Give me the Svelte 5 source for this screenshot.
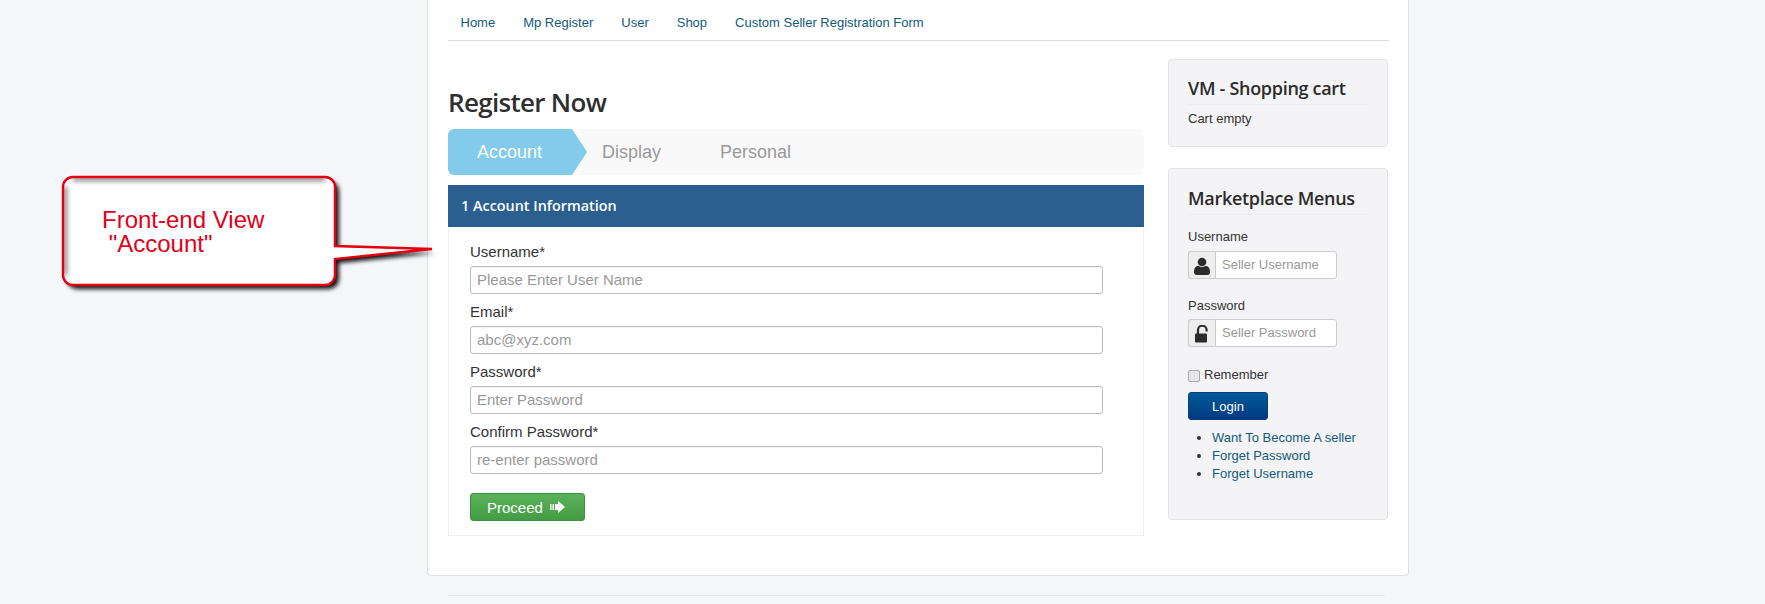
<script lang="ts">
const navLinks = ["Home", "Mp Register", "User", "Shop", "Custom Seller Registration Form"];
const fields = [
  { label: "Username*", placeholder: "Please Enter User Name" },
  { label: "Email*", placeholder: "abc@xyz.com" },
  { label: "Password*", placeholder: "Enter Password" },
  { label: "Confirm Password*", placeholder: "re-enter password" },
];
const sideLinks = ["Want To Become A seller", "Forget Password", "Forget Username"];
const bubble = "M13 3H265a10 10 0 0 1 10 10V72L372 75L275 85V101a10 10 0 0 1-10 10H13a10 10 0 0 1-10-10V13A10 10 0 0 1 13 3z";
</script>

<div class="page">
  <div class="card">
    <ul class="nav">
      {#each navLinks as link}
        <li>{link}</li>
      {/each}
    </ul>

    <div class="columns">
      <main class="content">
        <h1>Register Now</h1>
        <div class="wizard">
          <div class="step active">Account</div>
          <div class="step display">Display</div>
          <div class="step">Personal</div>
        </div>
        <div class="section-head">1 Account Information</div>
        <form class="section-body" onsubmit={(e) => e.preventDefault()}>
          {#each fields as f}
            <label class="field">
              <span>{f.label}</span>
              <input type="text" placeholder={f.placeholder} />
            </label>
          {/each}
          <button class="proceed" type="submit">
            Proceed
            <svg width="16" height="14" viewBox="0 0 16 14" aria-hidden="true">
              <path d="M0 4h1.500v6H0zM2.500 4H4v6H2.500zM5 4h3V1l7 6-7 6v-3H5z" fill="#fff" />
            </svg>
          </button>
        </form>
      </main>

      <aside class="side">
        <div class="module cart">
          <h3>VM - Shopping cart</h3>
          <p>Cart empty</p>
        </div>
        <div class="module menus">
          <h3>Marketplace Menus</h3>
          <div class="side-label">Username</div>
          <div class="group">
            <span class="addon">
              <svg width="16" height="18" viewBox="0 0 16 18" aria-hidden="true">
                <circle cx="8" cy="5" r="4.300" fill="#2b2b2b" />
                <path d="M0 15c0-4 2-6 4.500-6.200C5.500 9.700 6.700 10 8 10s2.500-.3 3.500-1.200C14 9 16 11 16 15c0 2-1 3-3 3H3c-2 0-3-1-3-3z" fill="#2b2b2b" />
              </svg>
            </span>
            <input type="text" placeholder="Seller Username" />
          </div>
          <div class="side-label second">Password</div>
          <div class="group tight">
            <span class="addon">
              <svg width="15" height="18" viewBox="0 0 15 18" aria-hidden="true">
                <path d="M3 9V5a4.300 4.300 0 0 1 8.600 0v1.500" fill="none" stroke="#2b2b2b" stroke-width="2.200" />
                <rect x="0" y="8.500" width="12" height="9" rx="1.200" fill="#2b2b2b" />
              </svg>
            </span>
            <input type="text" placeholder="Seller Password" />
          </div>
          <label class="remember"><input type="checkbox" /><span>Remember</span></label>
          <button class="login" type="button">Login</button>
          <ul class="links">
            {#each sideLinks as link}
              <li><span>{link}</span></li>
            {/each}
          </ul>
        </div>
      </aside>
    </div>
  </div>
  <div class="footer-line"></div>

  <div class="callout">
    <svg width="400" height="140" viewBox="0 0 400 140" aria-hidden="true">
      <defs>
        <filter id="sh" x="-5%" y="-10%" width="115%" height="125%">
          <feDropShadow dx="4" dy="4" stdDeviation="2" flood-color="#111" flood-opacity="1" />
        </filter>
        <filter id="inner" x="-5%" y="-10%" width="115%" height="125%">
          <feGaussianBlur stdDeviation="2.500" />
        </filter>
        <clipPath id="bubble">
          <path d={bubble} />
        </clipPath>
      </defs>
      <path d={bubble} fill="#fff" filter="url(#sh)" />
      <g clip-path="url(#bubble)">
        <path d="M13 5H265M5 13V101" fill="none" stroke="#777" stroke-width="4" filter="url(#inner)" />
      </g>
      <path d={bubble} fill="none" stroke="#e4000f" stroke-width="2.400" />
    </svg>
    <div class="callout-text">Front-end View<br />&nbsp;"Account"</div>
  </div>
</div>

<style>
  :global(body) {
    margin: 0;
    background: #f4f6f9;
    font-family: "Liberation Sans", Arial, sans-serif;
    color: #333;
  }
  .page {
    position: relative;
    height: 604px;
    overflow: hidden;
    padding-left: 427px;
  }
  .card {
    box-sizing: border-box;
    width: 982px;
    height: 576px;
    background: #fff;
    border: 1px solid #dcdfe3;
    border-top: 0;
    border-radius: 0 0 4px 4px;
    padding: 0 19px 0 20px;
  }
  .footer-line {
    width: 937px;
    margin: 19px 0 0 21px;
    border-top: 1px solid #e4e6ea;
  }
  .nav {
    list-style: none;
    margin: 0;
    padding: 4px 0 0 12.500px;
    height: 36px;
    display: flex;
    gap: 28px;
    align-items: center;
    border-bottom: 1px solid #dddddd;
    font-size: 13px;
    color: #135a7c;
  }
  .columns {
    display: flex;
    gap: 24px;
  }
  .content {
    width: 696px;
  }
  h1 {
    margin: 44px 0 0;
    height: 44px;
    line-height: 35px;
    font-family: "Open Sans", sans-serif;
    font-weight: 600;
    font-size: 26px;
    letter-spacing: -0.7px;
    color: #2f2f2f;
  }
  .wizard {
    display: flex;
    height: 46px;
    background: #faf9fa;
    border-radius: 6px;
    font-size: 18px;
    line-height: 46px;
    color: #999;
  }
  .step.active {
    width: 139px;
    box-sizing: border-box;
    padding-left: 29px;
    color: #fff;
    background: #82cbea;
    border-radius: 6px 0 0 6px;
    clip-path: polygon(0 0, 124px 0, 139px 50%, 124px 100%, 0 100%);
  }
  .step.display {
    margin-left: 15px;
    margin-right: 59px;
  }
  .section-head {
    margin-top: 10px;
    height: 42px;
    line-height: 42px;
    padding-left: 13px;
    background: #2b5f8f;
    color: #fff;
    font-family: "Open Sans", sans-serif;
    font-weight: 600;
    font-size: 14.400px;
  }
  .section-body {
    box-sizing: border-box;
    height: 309px;
    padding: 15px 0 0 21px;
    border: 1px solid #f0f0f0;
    border-top: 0;
  }
  .field {
    display: block;
    height: 60px;
    font-size: 15px;
    line-height: 20px;
    color: #333;
  }
  .field span {
    display: block;
    height: 24px;
  }
  .field input {
    display: block;
    box-sizing: border-box;
    width: 633px;
    height: 28px;
    padding: 0 6px 2px;
    border: 1px solid #bbbbbb;
    border-radius: 3px;
    font: 15px "Liberation Sans", Arial, sans-serif;
    outline: none;
    box-shadow: inset 0 1px 1px rgba(0, 0, 0, 0.05);
  }
  input::placeholder {
    color: #999;
    opacity: 1;
  }
  .proceed {
    display: flex;
    align-items: center;
    gap: 7px;
    box-sizing: border-box;
    width: 115px;
    height: 28px;
    margin-top: 11px;
    padding: 0 0 0 16px;
    border: 1px solid #3f8f3f;
    border-radius: 3px;
    background: linear-gradient(#5bb25b, #439b43);
    color: #fff;
    font: 15px "Liberation Sans", Arial, sans-serif;
  }
  .side {
    width: 220px;
    display: flex;
    flex-direction: column;
    gap: 21px;
    margin-top: 18px;
  }
  .module {
    box-sizing: border-box;
    padding: 16px 18px 0 19px;
    background: #f4f3f5;
    border: 1px solid #e3e3e3;
    border-radius: 4px;
    font-size: 13px;
  }
  .cart {
    height: 88px;
  }
  .menus {
    height: 352px;
  }
  h3 {
    margin: 0;
    height: 28px;
    line-height: 24px;
    font-family: "Open Sans", sans-serif;
    font-weight: 600;
    font-size: 18px;
    letter-spacing: -0.3px;
    color: #2b2b2b;
    border-bottom: 1px solid #eeedef;
  }
  .menus h3 {
    line-height: 26px;
    height: 29px;
  }
  .cart p {
    margin: 6px 0 0;
    line-height: 15px;
  }
  .side-label {
    margin-top: 14px;
    line-height: 15px;
  }
  .side-label.second {
    margin-top: 19px;
  }
  .group {
    display: flex;
    margin-top: 7px;
    width: 149px;
    height: 28px;
  }
  .group.tight {
    margin-top: 6px;
  }
  .addon {
    box-sizing: border-box;
    flex: none;
    width: 27px;
    display: flex;
    align-items: center;
    justify-content: center;
    padding-top: 2px;
    background: #eeeeee;
    border: 1px solid #cccccc;
    border-right: 0;
    border-radius: 3px 0 0 3px;
  }
  .group input {
    box-sizing: border-box;
    flex: 1;
    min-width: 0;
    padding: 0 6px 1px;
    border: 1px solid #cccccc;
    border-radius: 0 3px 3px 0;
    font: 13px "Liberation Sans", Arial, sans-serif;
    background: #fff;
  }
  .remember {
    display: flex;
    align-items: flex-start;
    gap: 4px;
    margin-top: 20px;
    line-height: 15px;
  }
  .remember input {
    appearance: none;
    box-sizing: border-box;
    width: 12px;
    height: 12px;
    margin: 3px 0 0;
    background: #e6e6e8;
    border: 1px solid #aaa;
    border-radius: 2px;
  }
  .login {
    display: block;
    box-sizing: border-box;
    width: 80px;
    height: 28px;
    margin-top: 10px;
    border: 1px solid #0a3f7c;
    border-radius: 3px;
    background: linear-gradient(#005a96, #013a84);
    color: #fff;
    font: 13px "Liberation Sans", Arial, sans-serif;
  }
  .links {
    margin: 9px 0 0;
    padding: 0 0 0 24px;
    line-height: 18px;
  }
  .links li {
    color: #333;
  }
  .links li span {
    color: #135a7c;
  }
  .callout {
    position: absolute;
    left: 60px;
    top: 174px;
    width: 400px;
    height: 140px;
  }
  .callout-text {
    position: absolute;
    left: 42px;
    top: 34px;
    font-size: 24px;
    line-height: 24px;
    color: #e2001a;
    white-space: nowrap;
  }
</style>
